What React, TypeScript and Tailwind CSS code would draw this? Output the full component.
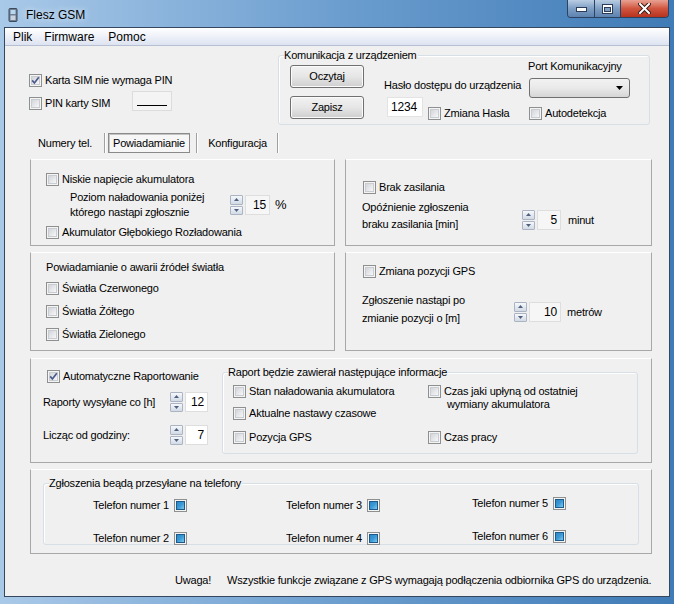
import React from "react";

function Check({ checked = false }: { checked?: boolean }) {
  return (
    <span className="relative inline-flex w-[13px] h-[13px] shrink-0 border border-[#8e8f8f] bg-[#f4f4f4]">
      <span className="absolute left-[1px] top-[1px] w-[9px] h-[9px] border border-[#c9ccd0] bg-gradient-to-br from-[#d2d5da] to-[#f7f7f8]" />
      {checked && (
        <svg className="absolute left-[1px] top-[1px]" width="9" height="9" viewBox="0 0 9 9">
          <path d="M1.2 4.4 L3.4 7 L7.8 1.2" fill="none" stroke="#4b5a8c" strokeWidth="1.7" />
        </svg>
      )}
    </span>
  );
}

function CL({
  checked,
  children,
  className = "",
}: {
  checked?: boolean;
  children: React.ReactNode;
  className?: string;
}) {
  return (
    <div className={"flex items-center h-[13px] gap-[3px] whitespace-nowrap " + className}>
      <Check checked={checked} />
      <span className="leading-[13px]">{children}</span>
    </div>
  );
}

function Spin({ value, boxClass }: { value: string; boxClass: string }) {
  return (
    <div className="flex items-center">
      <div className="flex flex-col gap-[1px] w-[13px] h-[20px]">
        <div className="flex-1 flex items-center justify-center border border-[#aab4c2] rounded-[1px] bg-gradient-to-b from-[#f6f8fb] to-[#d2dae5]">
          <svg width="5" height="3" viewBox="0 0 5 3">
            <path d="M0 3 L2.5 0 L5 3Z" fill="#4d607e" />
          </svg>
        </div>
        <div className="flex-1 flex items-center justify-center border border-[#aab4c2] rounded-[1px] bg-gradient-to-b from-[#f6f8fb] to-[#d2dae5]">
          <svg width="5" height="3" viewBox="0 0 5 3">
            <path d="M0 0 L2.5 3 L5 0Z" fill="#4d607e" />
          </svg>
        </div>
      </div>
      <div
        className={
          "ml-[2px] h-[20px] flex items-center justify-end pr-[3px] border border-[#dedede] text-[12px] " +
          boxClass
        }
      >
        {value}
      </div>
    </div>
  );
}

function Ind() {
  return (
    <span className="inline-flex w-[13px] h-[13px] shrink-0 border border-[#8e8f8f] bg-[#f4f4f4] items-center justify-center">
      <span className="w-[9px] h-[9px] border border-[#1d5a8a] bg-gradient-to-br from-[#2f86c8] via-[#3a9ad6] to-[#7cc8ee]" />
    </span>
  );
}

function WinButton({ children }: { children: React.ReactNode }) {
  return (
    <div className="w-[74px] h-[23px] flex items-center justify-center rounded-[3px] border border-[#707070] bg-gradient-to-b from-[#f2f2f2] via-[#e6e6e6] to-[#cfcfcf] shadow-[inset_0_0_0_1px_#fbfbfb]">
      {children}
    </div>
  );
}

function Sep() {
  return <div className="w-[2px] h-[20px] border-l border-[#a0a0a0] border-r border-r-white" />;
}

function Phone({ n }: { n: string }) {
  return (
    <div className="h-[16px] flex items-center gap-[5px] whitespace-nowrap">
      <span>Telefon numer {n}</span>
      <Ind />
    </div>
  );
}

const panel = "border border-[#a8a8a8] border-t-white";

export default function App() {
  return (
    <div className="w-[674px] h-[604px] overflow-hidden flex flex-col bg-gradient-to-r from-[#a9c9e8] via-[#6c9ecf] to-[#3f7bb6] font-['Liberation_Sans',Arial,sans-serif] text-[11px] tracking-[-0.2px] text-black">
      {/* Title bar */}
      <div className="h-[27px] shrink-0 flex items-start">
        <div className="flex items-center pl-[8px] pt-[6px] gap-[8px]">
          <svg width="10" height="14" viewBox="0 0 10 14">
            <rect x="1" y="0.5" width="8" height="13" rx="1" fill="#6f7f93" stroke="#3d4b5c" />
            <rect x="2.5" y="2" width="5" height="4" fill="#b8d8f0" />
            <rect x="2.5" y="7.5" width="5" height="4.5" fill="#c9d3de" />
          </svg>
          <span className="text-[12px] tracking-[0px] text-black [text-shadow:0_0_6px_rgba(255,255,255,0.95)]">
            Flesz GSM
          </span>
        </div>
        <div className="ml-auto mr-[5px] flex h-[18px] rounded-b-[4px] border border-t-0 border-[#2c4260] overflow-hidden">
          <div className="w-[27px] flex items-center justify-center bg-gradient-to-b from-[#b9cde3] via-[#7f9fc4] to-[#5d83b0] border-r border-[#2c4260]">
            <svg width="11" height="6" viewBox="0 0 11 6">
              <rect x="0.5" y="1.5" width="10" height="4" fill="#fff" stroke="#2a3c58" />
            </svg>
          </div>
          <div className="w-[26px] flex items-center justify-center bg-gradient-to-b from-[#b9cde3] via-[#7f9fc4] to-[#5d83b0] border-r border-[#2c4260]">
            <svg width="11" height="10" viewBox="0 0 11 10">
              <rect x="0.5" y="0.5" width="10" height="9" fill="#fff" stroke="#2a3c58" />
              <rect x="2.5" y="3.5" width="6" height="4" fill="#7f9fc4" stroke="#2a3c58" />
            </svg>
          </div>
          <div className="w-[47px] flex items-center justify-center bg-gradient-to-b from-[#e8a293] via-[#d0553f] to-[#b8321d]">
            <svg width="13" height="11" viewBox="0 0 13 11">
              <path d="M2 1 L11 10 M11 1 L2 10" stroke="#3a1a14" strokeWidth="4" strokeLinecap="square" />
              <path d="M2 1 L11 10 M11 1 L2 10" stroke="#fff" strokeWidth="2" strokeLinecap="square" />
            </svg>
          </div>
        </div>
      </div>

      {/* Client */}
      <div className="mx-[4px] h-[570px] shrink-0 border border-[#34475f] flex flex-col bg-[#f0f0f0]">
        {/* Menu */}
        <div className="h-[18px] shrink-0 flex items-center border-b border-[#b6c0d2] bg-gradient-to-b from-[#ffffff] to-[#dde3f1] text-[12px] tracking-[0px]">
          <span className="ml-[8px]">Plik</span>
          <span className="ml-[12px]">Firmware</span>
          <span className="ml-[14px]">Pomoc</span>
        </div>

        {/* Main */}
        <div className="flex-1 flex flex-col">
          {/* Top section */}
          <div className="h-[87px] shrink-0 flex">
            <div className="w-[273px] pl-[24px] pt-[28px] flex flex-col">
              <CL checked>Karta SIM nie wymaga PIN</CL>
              <div className="flex items-start mt-[4px]">
                <CL className="mt-[6px]">PIN karty SIM</CL>
                <div className="ml-[22px] w-[40px] h-[20px] border border-[#dcdcdc] bg-[#f4f4f4] flex items-center justify-center">
                  <div className="w-[30px] h-[1px] bg-black mt-[8px]" />
                </div>
              </div>
            </div>
            <div className="relative mt-[9px] w-[372px] h-[70px] border border-[#d5dfe5] rounded-[3px] shadow-[inset_1px_1px_0_#fff] flex">
              <span className="absolute left-[5px] top-[-8px] leading-[14px] bg-[#f0f0f0] pr-[1px]">
                Komunikacja z urządzeniem
              </span>
              <div className="ml-[11px] mt-[9px] flex flex-col gap-[8px]">
                <WinButton>Oczytaj</WinButton>
                <WinButton>Zapisz</WinButton>
              </div>
              <div className="ml-[20px] mt-[22px] w-[144px] flex flex-col">
                <span className="leading-[14px] whitespace-nowrap">Hasło dostępu do urządzenia</span>
                <div className="flex items-start mt-[5px]">
                  <div className="ml-[3px] w-[36px] h-[20px] border border-[#e3e3e3] bg-white flex items-center pl-[3px] text-[12px]">
                    1234
                  </div>
                  <CL className="ml-[5px] mt-[10px]">Zmiana Hasła</CL>
                </div>
              </div>
              <div className="mt-[3px] flex flex-col">
                <span className="leading-[14px] whitespace-nowrap">Port Komunikacyjny</span>
                <div className="ml-[1px] mt-[5px] w-[101px] h-[20px] rounded-[3px] border border-[#707070] bg-gradient-to-b from-[#f2f2f2] via-[#e9e9e9] to-[#d6d6d6] flex items-center justify-end pr-[6px]">
                  <svg width="7" height="4" viewBox="0 0 7 4">
                    <path d="M0 0 L7 0 L3.5 4Z" fill="#000" />
                  </svg>
                </div>
                <CL className="ml-[1px] mt-[9px]">Autodetekcja</CL>
              </div>
            </div>
          </div>

          {/* Tabs */}
          <div className="h-[20px] shrink-0 flex items-stretch pl-[21px]">
            <div className="w-[78px] flex items-center justify-center">Numery tel.</div>
            <Sep />
            <div className="ml-[2px] w-[82px] flex items-center justify-center border border-[#8a8a8a] shadow-[inset_1px_1px_0_#c4c4c4] bg-[#f6f6f6]">
              Powiadamianie
            </div>
            <div className="ml-[6px]">
              <Sep />
            </div>
            <div className="w-[79px] flex items-center justify-center">Konfiguracja</div>
            <Sep />
          </div>

          {/* Panels grid */}
          <div className="mt-[6px] ml-[25px] grid grid-cols-[305px_307px] grid-rows-[87px_99px] gap-x-[10px] gap-y-[6px]">
            {/* Left top */}
            <div className={panel + " pl-[15px] pt-[13px] flex flex-col"}>
              <CL>Niskie napięcie akumulatora</CL>
              <div className="mt-[4px] flex items-center">
                <div className="ml-[24px] w-[160px] leading-[15px]">
                  <div>Poziom naładowania poniżej</div>
                  <div>którego nastąpi zgłosznie</div>
                </div>
                <Spin value="15" boxClass="w-[25px] bg-[#f6f6f6]" />
                <span className="ml-[5px] text-[13px]">%</span>
              </div>
              <CL className="mt-[6px]">Akumulator Głębokiego Rozładowania</CL>
            </div>

            {/* Right top */}
            <div className={panel + " pl-[17px] pt-[21px] flex flex-col"}>
              <CL>Brak zasilania</CL>
              <div className="mt-[5px] flex items-start">
                <div className="ml-[-1px] w-[160px] leading-[17px]">
                  <div>Opóźnienie zgłoszenia</div>
                  <div>braku zasilania [min]</div>
                </div>
                <div className="mt-[11px] flex items-center">
                  <Spin value="5" boxClass="w-[24px] bg-[#f6f6f6]" />
                  <span className="ml-[7px]">minut</span>
                </div>
              </div>
            </div>

            {/* Left middle */}
            <div className={panel + " pl-[15px] pt-[7px] flex flex-col"}>
              <span className="leading-[14px]">Powiadamianie o awarii źródeł światła</span>
              <CL className="mt-[8px]">Światła Czerwonego</CL>
              <CL className="mt-[10px]">Światła Żółtego</CL>
              <CL className="mt-[10px]">Światła Zielonego</CL>
            </div>

            {/* Right middle */}
            <div className={panel + " pl-[17px] pt-[12px] flex flex-col"}>
              <CL>Zmiana pozycji GPS</CL>
              <div className="mt-[13px] flex items-start">
                <div className="ml-[-1px] w-[152px] leading-[18px]">
                  <div>Zgłoszenie nastąpi po</div>
                  <div>zmianie pozycji o [m]</div>
                </div>
                <div className="mt-[11px] flex items-center">
                  <Spin value="10" boxClass="w-[32px] bg-[#f6f6f6]" />
                  <span className="ml-[6px]">metrów</span>
                </div>
              </div>
            </div>
          </div>

          {/* Panel 5 */}
          <div className={panel + " mt-[7px] ml-[25px] w-[622px] h-[105px] flex"}>
            <div className="pl-[12px] pt-[11px] flex flex-col">
              <CL checked className="ml-[4px]">Automatyczne Raportowanie</CL>
              <div className="mt-[9px] flex items-center">
                <span className="w-[127px] whitespace-nowrap">Raporty wysyłane co [h]</span>
                <Spin value="12" boxClass="w-[23px] bg-white" />
              </div>
              <div className="mt-[13px] flex items-center">
                <span className="w-[127px] whitespace-nowrap">Licząc od godziny:</span>
                <Spin value="7" boxClass="w-[23px] bg-white" />
              </div>
            </div>
            <div className="relative ml-[14px] mt-[13px] w-[416px] h-[82px] border border-[#d5dfe5] rounded-[3px] shadow-[inset_1px_1px_0_#fff] flex">
              <span className="absolute left-[5px] top-[-8px] leading-[14px] bg-[#f0f0f0] pr-[1px]">
                Raport będzie zawierał następujące informacje
              </span>
              <div className="pl-[10px] pt-[12px] w-[205px] flex flex-col">
                <CL>Stan naładowania akumulatora</CL>
                <CL className="mt-[9px]">Aktualne nastawy czasowe</CL>
                <CL className="mt-[11px]">Pozycja GPS</CL>
              </div>
              <div className="pt-[12px] flex flex-col">
                <CL>Czas jaki upłyną od ostatniej</CL>
                <span className="ml-[19px] leading-[13px]">wymiany akumulatora</span>
                <CL className="mt-[20px]">Czas pracy</CL>
              </div>
            </div>
          </div>

          {/* Panel 6 */}
          <div className={panel + " mt-[6px] ml-[25px] w-[622px] h-[85px] flex"}>
            <div className="relative ml-[12px] mt-[13px] w-[596px] h-[62px] border border-[#d5dfe5] rounded-[3px] shadow-[inset_1px_1px_0_#fff] flex">
              <span className="absolute left-[5px] top-[-8px] leading-[14px] bg-[#f0f0f0] pr-[1px]">
                Zgłoszenia beądą przesyłane na telefony
              </span>
              <div className="pl-[49px] pt-[13px] flex">
                <div className="w-[193px] flex flex-col gap-[17px]">
                  <Phone n="1" />
                  <Phone n="2" />
                </div>
                <div className="w-[186px] flex flex-col gap-[17px]">
                  <Phone n="3" />
                  <Phone n="4" />
                </div>
                <div className="flex flex-col gap-[17px] mt-[-2px]">
                  <Phone n="5" />
                  <Phone n="6" />
                </div>
              </div>
            </div>
          </div>

          {/* Bottom note */}
          <div className="mt-[19px] pl-[170px] flex leading-[14px] whitespace-nowrap">
            <span>Uwaga!</span>
            <span className="ml-[16px]">
              Wszystkie funkcje związane z GPS wymagają podłączenia odbiornika GPS do urządzenia.
            </span>
          </div>
        </div>
      </div>
    </div>
  );
}
